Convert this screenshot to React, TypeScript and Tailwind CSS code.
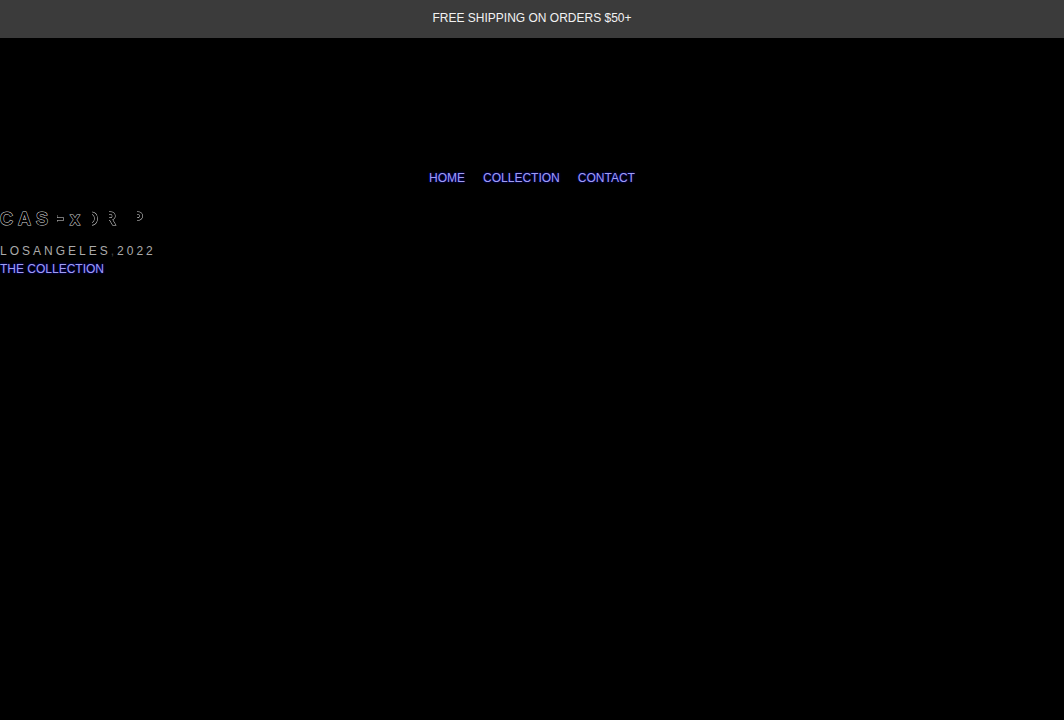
const outline = "font-bold text-black [-webkit-text-stroke:1px_#d4d4d4] [paint-order:stroke_fill]";
const link = "text-xs leading-[18px] text-[#a09ef0] [text-shadow:0_0_2px_#0000ee]";

export default function App() {
  return (
    <div className="min-h-screen bg-black font-['Liberation_Sans',Arial,sans-serif]">
      <header>
        <p className="bg-[#3b3b3b] pt-[9px] pb-[11px] text-center text-xs leading-[18px] text-[#f2f2f2]">
          FREE SHIPPING ON ORDERS $50+
        </p>
        <nav className="mt-[131px] flex justify-center gap-[18px]">
          <a href="#home" className={link}>HOME</a>
          <a href="#collection" className={link}>COLLECTION</a>
          <a href="#contact" className={link}>CONTACT</a>
        </nav>
      </header>
      <main className="mt-4">
        <h1 className={`text-lg leading-8 tracking-[5px] ${outline}`}>
          CAS
          <span className="[mask-image:linear-gradient(90deg,transparent_25%,black_25%)]">
            <span className="[mask-image:linear-gradient(transparent_30%,black_30%,black_65%,transparent_65%)]">E</span>
          </span>
          x
          <span className="[mask-image:linear-gradient(90deg,transparent_38%,black_38%)]">D</span>
          <span className="[mask-image:linear-gradient(90deg,transparent_35%,black_35%)]">R</span>
          <span className="[mask-image:linear-gradient(transparent,transparent)]">I</span>
          <span className="[mask-image:linear-gradient(90deg,transparent_35%,black_35%)]">P</span>
        </h1>
        <p className="mt-[7px] text-xs leading-[18px] tracking-[3px] text-[#aaaaaa]">
          LOSANGELES<span className="text-[#444444]">,</span>2022
        </p>
        <a href="#collection" className={`block ${link}`}>THE COLLECTION</a>
      </main>
    </div>
  );
}
